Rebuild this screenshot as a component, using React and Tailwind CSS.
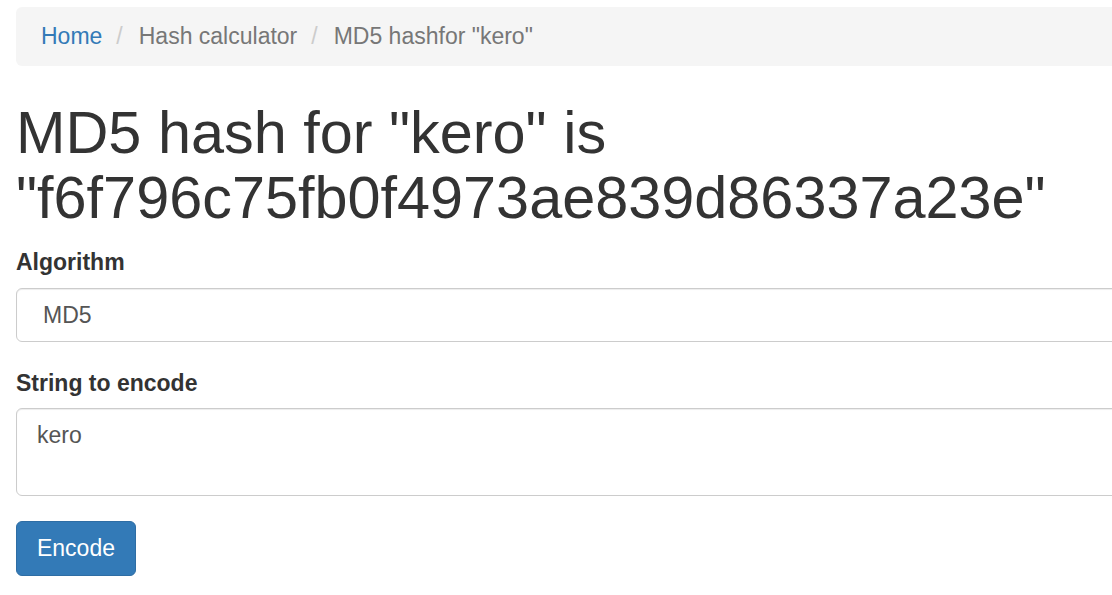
import React from 'react';

export default function App() {
  return (
    <div className="w-[1112px] h-[595px] overflow-hidden bg-white text-[#333] font-['Liberation_Sans',Arial,sans-serif]">
      <div className="w-[1180px] pl-4 pt-[7px]">
        {/* Breadcrumb */}
        <ol className="flex items-center h-[59px] px-[25px] bg-[#f5f5f5] rounded-[6px] text-[23px] leading-[33px]">
          <li><a className="text-[#337ab7]">Home</a></li>
          <li className="pl-[14px] pr-[16px] text-[#ccc]">/</li>
          <li className="text-[#777]">Hash calculator</li>
          <li className="pl-[14px] pr-[16px] text-[#ccc]">/</li>
          <li className="text-[#777]">MD5 hashfor "kero"</li>
        </ol>

        {/* Title */}
        <h1 className="mt-[34px] text-[59.4px] leading-[65px] font-normal">
          MD5 hash for "kero" is<br />"f6f796c75fb0f4973ae839d86337a23e"
        </h1>

        <form className="mt-[16px]">
          <div className="mb-[25px]">
            <label className="block text-[23px] leading-[33px] font-bold mb-[9px]">Algorithm</label>
            <div className="h-[54px] flex items-center pl-[26px] border border-[#ccc] rounded-[6px] text-[23px] text-[#555] shadow-[inset_0_1px_1px_rgba(0,0,0,0.075)]">
              MD5
            </div>
          </div>
          <div className="mb-[25px]">
            <label className="block text-[23px] leading-[33px] font-bold mb-[8px]">String to encode</label>
            <div className="h-[88px] pl-[20px] pt-[10px] border border-[#ccc] rounded-[6px] text-[23px] leading-[33px] text-[#555] shadow-[inset_0_1px_1px_rgba(0,0,0,0.075)]">
              kero
            </div>
          </div>
          <button type="button" className="w-[120px] h-[55px] bg-[#337ab7] border border-[#2e6da4] rounded-[6px] text-white text-[23px] leading-[33px]">
            Encode
          </button>
        </form>
      </div>
    </div>
  );
}
